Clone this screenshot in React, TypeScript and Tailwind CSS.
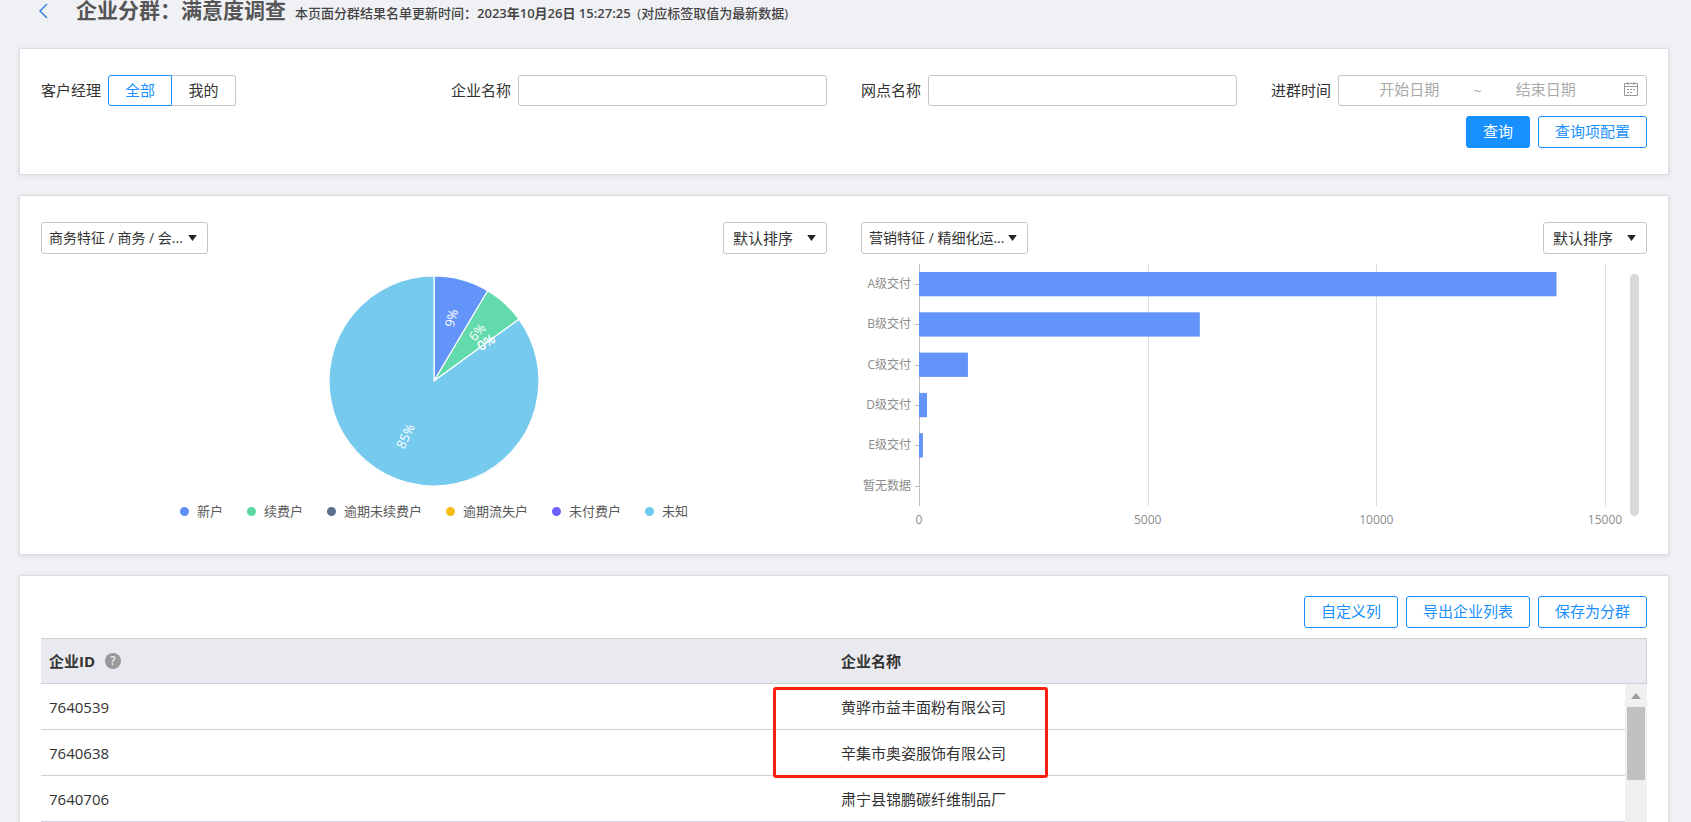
import React from "react";

const BTN =
  "h-8 rounded-[3px] border border-[#1890ff] bg-white px-4 pb-[2px] text-[15px] leading-5 text-[#1890ff] cursor-pointer";
const CARD = "border border-[#dcdde3] bg-white px-[21px] shadow-[0_1px_6px_rgba(0,0,0,0.08)]";
const LABEL = "shrink-0 pb-[2px] text-[15px] leading-5 text-[#333]";
const INPUT = "h-[31px] min-w-0 flex-1 rounded-[3px] border border-[#c4c5cc] px-2 text-[15px]";

const polar = (angle: number, r: number) => {
  const a = ((angle - 90) * Math.PI) / 180;
  return [105 + r * Math.cos(a), 105 + r * Math.sin(a)];
};

const slices = [
  { from: 0, to: 30.8, color: "#6394f9" },
  { from: 30.8, to: 54, color: "#63daab" },
  { from: 54, to: 360, color: "#75caee" },
];

const sliceLabels = [
  { x: 122, y: 42, rotate: -75, text: "9%" },
  { x: 148, y: 56, rotate: -48, text: "6%" },
  { x: 157, y: 66, rotate: -36, text: "0%" },
  { x: 157, y: 66, rotate: -30, text: "0%" },
  { x: 76, y: 160, rotate: -64, text: "85%" },
];

function PieChart() {
  return (
    <svg viewBox="0 0 210 210" className="h-[210px] w-[210px]" role="img" aria-label="商务特征">
      {slices.map((s) => {
        const [x1, y1] = polar(s.from, 105);
        const [x2, y2] = polar(s.to, 105);
        return (
          <path
            key={s.color}
            d={`M105 105L${x1} ${y1}A105 105 0 ${s.to - s.from > 180 ? 1 : 0} 1 ${x2} ${y2}Z`}
            fill={s.color}
            stroke="#fff"
            strokeWidth="1.2"
          />
        );
      })}
      {sliceLabels.map((l, i) => (
        <text
          key={i}
          x={l.x}
          y={l.y}
          transform={`rotate(${l.rotate} ${l.x} ${l.y})`}
          className="fill-white text-[13px]"
          textAnchor="middle"
          dominantBaseline="central"
        >
          {l.text}
        </text>
      ))}
    </svg>
  );
}

const legend = [
  ["新户", "bg-[#5b8ff9]"],
  ["续费户", "bg-[#5ad8a6]"],
  ["逾期未续费户", "bg-[#5d7092]"],
  ["逾期流失户", "bg-[#f6bd16]"],
  ["未付费户", "bg-[#6f5ef9]"],
  ["未知", "bg-[#6dc8ec]"],
];

const bars = [
  ["A级交付", 13940],
  ["B级交付", 6140],
  ["C级交付", 1070],
  ["D级交付", 175],
  ["E级交付", 85],
  ["暂无数据", 0],
] as const;

function BarChart() {
  const scale = 686 / 15000;
  return (
    <svg viewBox="0 0 786 272" className="block w-full" role="img" aria-label="营销特征">
      {[0, 5000, 10000, 15000].map((v) => (
        <g key={v}>
          <rect x={Math.round(58 + v * scale)} y="0" width="1" height="242" fill={v === 0 ? "#bfbfbf" : "#dedede"} />
          <text x={58 + v * scale} y="260" textAnchor="middle" className="fill-[#8c8c8c] text-[12px]">
            {v}
          </text>
        </g>
      ))}
      {bars.map(([name, value], i) => {
        const mid = 20 + i * 40.3;
        return (
          <g key={name}>
            <text x="50" y={mid + 4} textAnchor="end" className="fill-[#8c8c8c] text-[12px]">
              {name}
            </text>
            <rect x="54" y={Math.round(mid)} width="4" height="1" fill="#bfbfbf" />
            <rect x="58" y={mid - 12} width={value * scale} height="24.3" fill="#6394f9" />
          </g>
        );
      })}
      <rect x="769" y="10" width="9" height="242" rx="4.5" fill="#d9d9d9" />
    </svg>
  );
}

function Caret() {
  return (
    <svg viewBox="0 0 10 7" className="h-[6px] w-[9px]" aria-hidden="true">
      <path d="M0 0h10L5 7z" fill="#222" />
    </svg>
  );
}

function FeaturePicker({ value }: { value: string }) {
  return (
    <div className="relative flex h-8 w-[167px] items-center rounded-[3px] border border-[#c4c5cc] px-[7px]">
      <select
        aria-label="特征"
        className="w-full appearance-none bg-transparent pb-[1px] text-[14px] leading-5 whitespace-nowrap text-[#333] outline-none"
      >
        <option>{value}</option>
      </select>
      <span className="pointer-events-none absolute right-[10px]">
        <Caret />
      </span>
    </div>
  );
}

function SortPicker() {
  return (
    <div className="relative flex h-8 w-[104px] items-center rounded-[3px] border border-[#c4c5cc] px-[9px]">
      <select
        aria-label="排序"
        className="w-full appearance-none bg-transparent text-[15px] leading-5 text-[#333] outline-none"
      >
        <option>默认排序</option>
      </select>
      <span className="pointer-events-none absolute right-[10px]">
        <Caret />
      </span>
    </div>
  );
}

const rows = [
  ["7640539", "黄骅市益丰面粉有限公司"],
  ["7640638", "辛集市奥姿服饰有限公司"],
  ["7640706", "肃宁县锦鹏碳纤维制品厂"],
];

export default function App() {
  return (
    <div className="h-screen overflow-hidden bg-[#f0f1f5] pr-[22px] pl-[19px] font-['Open_Sans','Noto_Sans_CJK_SC',sans-serif] text-[#333]">
      <header className="flex h-12 items-start pl-[18px]">
        <a href="#" aria-label="返回" className="mt-[3px] mr-[27px]">
          <svg viewBox="0 0 12 16" className="h-4 w-3" fill="none" stroke="#3b82e0" strokeWidth="1.5">
            <path d="M10 1L3 8l7 7" />
          </svg>
        </a>
        <div className="flex items-baseline gap-[9px]">
          <h1 className="text-[21px] leading-[21px] font-bold text-[#555]">企业分群：满意度调查</h1>
          <p className="text-[13px] leading-[18px] font-medium whitespace-pre text-[#444]">
            本页面分群结果名单更新时间：<span className="font-semibold">2023年10月26日 15:27:25</span>
            {"  "}(对应标签取值为最新数据)
          </p>
        </div>
      </header>

      <main className="flex flex-col gap-5">
        <section className={`${CARD} pt-[26px] pb-[26px]`}>
          <form className="flex flex-col gap-[10px]" onSubmit={(e) => e.preventDefault()}>
            <div className="grid grid-cols-4 gap-[34px]">
              <div className="flex items-center gap-[7px]">
                <span className={LABEL}>客户经理</span>
                <div className="flex">
                  <button type="button" className="h-[31px] w-16 rounded-l-[3px] border border-[#1890ff] pb-[2px] text-[15px] leading-5 text-[#1890ff]">
                    全部
                  </button>
                  <button type="button" className="h-[31px] w-16 rounded-r-[3px] border border-l-0 border-[#c4c5cc] pb-[2px] text-[15px] leading-5">
                    我的
                  </button>
                </div>
              </div>
              <label className="flex items-center gap-[7px]">
                <span className={LABEL}>企业名称</span>
                <input type="text" className={INPUT} />
              </label>
              <label className="flex items-center gap-[7px]">
                <span className={LABEL}>网点名称</span>
                <input type="text" className={INPUT} />
              </label>
              <div className="flex items-center gap-[7px]">
                <span className={LABEL}>进群时间</span>
                <div className="flex h-[31px] min-w-0 flex-1 items-center rounded-[3px] border border-[#c4c5cc] px-2 pb-[2px] text-[15px] text-[#aaa]">
                  <input aria-label="开始日期" placeholder="开始日期" className="min-w-0 flex-1 text-center placeholder:text-[#aaa]" />
                  <span className="w-3 text-center leading-5">~</span>
                  <input aria-label="结束日期" placeholder="结束日期" className="min-w-0 flex-1 text-center placeholder:text-[#aaa]" />
                  <svg viewBox="0 0 14 14" className="mb-[2px] ml-4 h-[14px] w-[14px] shrink-0" fill="none" stroke="#999">
                    <path d="M.5 1.5h13v12H.5zM.5 4.5h13M4 0v3M10 0v3" />
                    <path d="M3 7.5h8M3 10.5h5" strokeDasharray="2 1" />
                  </svg>
                </div>
              </div>
            </div>
            <div className="flex justify-end gap-2">
              <button type="submit" className="h-8 rounded-[3px] border border-[#1890ff] bg-[#1890ff] px-4 pb-[2px] text-[15px] leading-5 text-white">
                查询
              </button>
              <button type="button" className={BTN}>查询项配置</button>
            </div>
          </form>
        </section>

        <section className={`${CARD} grid grid-cols-2 gap-[34px] pt-[26px] pb-[18px]`}>
          <div>
            <div className="flex justify-between">
              <FeaturePicker value="商务特征 / 商务 / 会..." />
              <SortPicker />
            </div>
            <div className="mt-[22px] flex justify-center">
              <PieChart />
            </div>
            <ul className="mt-[15px] flex justify-center gap-6 text-[13px] leading-5 text-[#595959]">
              {legend.map(([name, color]) => (
                <li key={name} className="flex items-center gap-2">
                  <span className={`h-[9px] w-[9px] rounded-full ${color}`} />
                  {name}
                </li>
              ))}
            </ul>
          </div>
          <div>
            <div className="flex justify-between">
              <FeaturePicker value="营销特征 / 精细化运..." />
              <SortPicker />
            </div>
            <div className="mt-[10px]">
              <BarChart />
            </div>
          </div>
        </section>

        <section className={`${CARD} pt-5`}>
          <div className="flex justify-end gap-2">
            <button type="button" className={BTN}>自定义列</button>
            <button type="button" className={BTN}>导出企业列表</button>
            <button type="button" className={BTN}>保存为分群</button>
          </div>
          <table className="mt-[10px] w-full table-fixed border-separate border-spacing-0 text-left text-[15px] leading-5">
            <colgroup>
              <col />
              <col />
              <col className="w-[22px]" />
            </colgroup>
            <thead className="bg-[#e9eaef]">
              <tr className="h-[46px]">
                <th className="border-y border-[#d0d1d8] px-2 font-bold">
                  <span className="flex items-center gap-[10px]">
                    企业ID
                    <button type="button" aria-label="说明" className="flex h-4 w-4 items-center justify-center rounded-full bg-[#999] text-[12px] leading-4 font-semibold text-[#e9eaef]">
                      ?
                    </button>
                  </span>
                </th>
                <th className="border-y border-[#d0d1d8] px-2 font-bold">企业名称</th>
                <td className="border-y border-r border-[#d0d1d8]" />
              </tr>
            </thead>
            <tbody>
              {rows.map(([id, name], i) => (
                <tr key={id} className="h-[46px]">
                  <td className="border-b border-[#d0d1d8] px-2">{id}</td>
                  <td className={i === 0 ? "relative z-10 border-b border-[#d0d1d8] px-2" : "border-b border-[#d0d1d8] px-2"}>
                    {name}
                    {i === 0 && (
                      <span className="pointer-events-none absolute top-[3px] -left-[60px] h-[91px] w-[275px] rounded-[3px] border-3 border-[#ff2010]" />
                    )}
                  </td>
                  {i === 0 && (
                    <td rowSpan={3} className="bg-[#f0f0f0] p-0 align-top">
                      <div className="flex flex-col items-center gap-2 pt-[9px]">
                        <svg viewBox="0 0 10 6" className="h-[6px] w-[10px]" aria-hidden="true">
                          <path d="M0 6h10L5 0z" fill="#a0a0a0" />
                        </svg>
                        <div className="h-[73px] w-[18px] bg-[#c1c1c1]" />
                      </div>
                    </td>
                  )}
                </tr>
              ))}
            </tbody>
          </table>
        </section>
      </main>
    </div>
  );
}
